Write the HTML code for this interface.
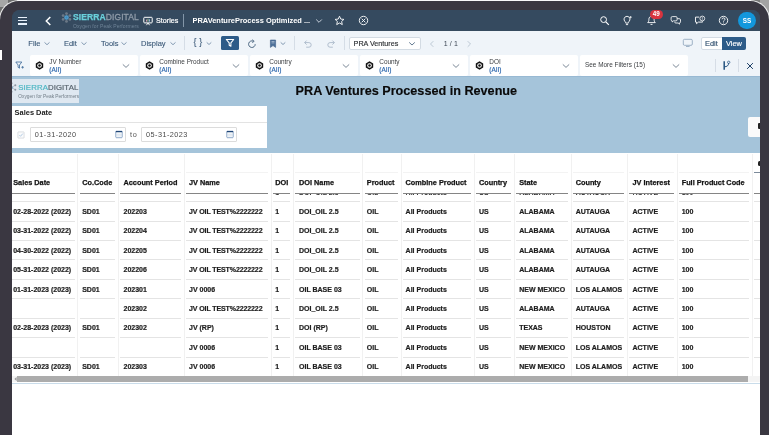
<!DOCTYPE html>
<html>
<head>
<meta charset="utf-8">
<title>PRA Ventures Processed in Revenue</title>
<style>
*{box-sizing:border-box;margin:0;padding:0}
html,body{width:769px;height:435px;overflow:hidden;background:#fff;font-family:"Liberation Sans",sans-serif;}
.abs{position:absolute}
#stage{position:absolute;left:0;top:0;width:769px;height:435px;overflow:hidden;background:#fff}
.cornL{left:0;top:0;width:20px;height:22px;background:#6e6e6e}
.cornL2{left:0;top:0;width:7.5px;height:7px;background:#a6a6a6}
.cornR{left:749px;top:0;width:20px;height:22px;background:#767676}
.cornR2{left:760px;top:0;width:9px;height:22px;background:#a3a3a3}
.toplight{left:17px;top:0;width:734px;height:1px;background:#d6d6da}
#frame{left:0;top:.8px;width:769px;height:470px;background:#3a3741;border-radius:19px;box-shadow:0 0 0 1px rgba(255,255,255,.85)}
.sidebtn{left:0;top:49.7px;width:1.5px;height:10.3px;background:#fff}
#screen{left:12px;top:10px;width:748px;height:460px;background:linear-gradient(#354a5f 0,#354a5f 21px,#fff 21px);border-radius:8px 8px 0 0;overflow:hidden}
#o{left:-12px;top:-10px;width:769px;height:470px;will-change:transform}
#nav{left:0;top:0;width:769px;height:31.3px;background:#354a5f;color:#fff}
#tool{left:0;top:31px;width:769px;height:23px;background:#eff4f9}
#filt{left:0;top:54px;width:769px;height:22px;background:#eff4f9}
#hero{left:0;top:76.3px;width:769px;height:77.2px;background:#a5c4da;border-top:1px solid #98b9d3}
#tbl{left:0;top:153.5px;width:769px;height:300px;background:#fff}
.t{position:absolute;white-space:nowrap;line-height:1}
.tb{color:#3a5877;font-size:7.5px;-webkit-text-stroke:.1px #3a5877}
.fbox{position:absolute;top:55.4px;height:20.9px;width:108px;background:#fff;border-radius:2px}
.f1{font-size:6.4px;color:#3a3d40}
.f2{font-size:6.4px;letter-spacing:.18px;color:#2e68ad;-webkit-text-stroke:.2px #2e68ad}
.c{font-size:7px;font-weight:bold;color:#1e1e1e;-webkit-text-stroke:.2px #1e1e1e}
.h{font-size:7.32px;font-weight:bold;color:#141414;-webkit-text-stroke:.25px #141414}
.vl{position:absolute;width:1px;background:#f1f1f1}
.hl{position:absolute;height:1px;background:#e4e4e4}
.hd{position:absolute;height:1px;background:#858585}
.gh{position:absolute;top:193.5px;height:1.4px;overflow:hidden;white-space:nowrap;font-size:7px;font-weight:bold;color:#333;line-height:1}
.gh span{position:relative;top:-4.1px;display:block}
</style>
</head>
<body>
<div id="stage">
  <div class="abs cornL"></div><div class="abs cornL2"></div>
  <div class="abs cornR"></div><div class="abs cornR2"></div>
  <div class="abs toplight"></div>
  <div class="abs" id="frame"></div>
  <div class="abs sidebtn"></div>
  <div class="abs" id="screen"><div class="abs" id="o">
    <div class="abs" id="nav"></div>
    <div class="abs" id="tool"></div>
    <div class="abs" id="filt"></div>
    <div class="abs" id="hero"></div>
    <div class="abs" id="tbl"></div>
    <div id="navc">

      <!-- hamburger -->
      <div class="abs" style="left:18px;top:16.8px;width:9.4px;height:1.4px;background:#e8f1fb"></div>
      <div class="abs" style="left:18px;top:20.1px;width:9.4px;height:1.4px;background:#e8f1fb"></div>
      <div class="abs" style="left:18px;top:23.4px;width:9.4px;height:1.4px;background:#e8f1fb"></div>
      <!-- back chevron -->
      <svg class="abs" style="left:44px;top:15px" width="9" height="12" viewBox="0 0 9 12"><path d="M6.3 2 L2.3 6 L6.3 10" fill="none" stroke="#fff" stroke-width="1.5"/></svg>
      <!-- logo -->
      <svg class="abs" style="left:61.3px;top:11.5px" width="11" height="11" viewBox="0 0 11 11"><g fill="#6d7a88"><circle cx="5.5" cy="1.6" r="1.35"/><circle cx="8.88" cy="3.55" r="1.35"/><circle cx="8.88" cy="7.45" r="1.35"/><circle cx="5.5" cy="9.4" r="1.35"/><circle cx="2.12" cy="7.45" r="1.35"/><circle cx="2.12" cy="3.55" r="1.35"/></g><path d="M5.5 1.6L5.5 9.4M8.88 3.55L2.12 7.45M8.88 7.45L2.12 3.55" stroke="#66727f" stroke-width=".45"/><circle cx="5.5" cy="5.5" r="2.25" fill="#4e9dcc"/><circle cx="5.5" cy="5.5" r="1" fill="#3f86b8"/></svg>
      <div class="t" id="lg1" style="left:73px;top:12.7px;font-size:8.5px;font-weight:bold;color:#6ad0db;-webkit-text-stroke:.25px #6ad0db;letter-spacing:.1px">SIERRA<span style="color:#8f9ba8;font-weight:normal;-webkit-text-stroke:.3px #8f9ba8">DIGITAL</span></div>
      <div class="t" id="lg2" style="left:73px;top:24px;font-size:5px;color:#6f8497;letter-spacing:.1px">Oxygen for Peak Performers</div>
      <!-- stories -->
      <svg class="abs" style="left:142.8px;top:15.6px" width="10" height="10" viewBox="0 0 10 10"><rect x=".8" y="1.3" width="8.4" height="5.6" rx=".8" fill="none" stroke="#fff" stroke-width="1"/><path d="M3.4 9.2L5 7L6.6 9.2" fill="none" stroke="#fff" stroke-width=".9"/><path d="M3.5 3.6v2" stroke="#e9a3b8" stroke-width=".9"/><path d="M5 2.8v2.8" stroke="#a9d6a0" stroke-width=".9"/><path d="M6.5 3.3v2.3" stroke="#9cc4ee" stroke-width=".9"/></svg>
      <div class="t" id="st" style="left:156.1px;top:17.7px;font-size:7.15px;color:#fff;-webkit-text-stroke:.2px #fff">Stories</div>
      <div class="abs" style="left:183px;top:14px;width:1px;height:13px;background:#8396a8"></div>
      <div class="t" id="ttl" style="left:192.5px;top:17.2px;font-size:7.45px;font-weight:bold;color:#fff">PRAVentureProcess Optimized ...</div>
      <svg class="abs" style="left:314.6px;top:18px" width="8" height="6" viewBox="0 0 8 6"><path d="M1.2 1.5 L4 4.3 L6.8 1.5" fill="none" stroke="#d5dde6" stroke-width=".9"/></svg>
      <svg class="abs" style="left:334.1px;top:15.3px" width="11" height="11" viewBox="0 0 11 11"><path d="M5.5 1.2 L6.8 4.1 L9.9 4.4 L7.6 6.5 L8.3 9.6 L5.5 8 L2.7 9.6 L3.4 6.5 L1.1 4.4 L4.2 4.1 Z" fill="none" stroke="#fff" stroke-width=".9" stroke-linejoin="round"/></svg>
      <svg class="abs" style="left:357.8px;top:15.3px" width="11" height="11" viewBox="0 0 11 11"><circle cx="5.5" cy="5.5" r="4.2" fill="none" stroke="#fff" stroke-width=".9"/><path d="M3.7 3.7L7.3 7.3M7.3 3.7L3.7 7.3" stroke="#fff" stroke-width=".9"/></svg>
      <!-- right icons -->
      <svg class="abs" style="left:599px;top:15px" width="11" height="11" viewBox="0 0 11 11"><circle cx="4.6" cy="4.6" r="2.9" fill="none" stroke="#fff" stroke-width="1"/><path d="M6.8 6.8L9.8 9.8" stroke="#fff" stroke-width="1.2"/></svg>
      <svg class="abs" style="left:622px;top:15px" width="11" height="11" viewBox="0 0 11 11"><path d="M5 1.3a3 3 0 0 1 2 5.2c-.5.5-.7.9-.7 1.6H3.7c0-.7-.2-1.1-.7-1.6a3 3 0 0 1 2-5.2z M3.9 9.6h2.2" fill="none" stroke="#fff" stroke-width=".9"/><path d="M8.6 1v2.4M7.4 2.2h2.4" stroke="#fff" stroke-width=".7"/></svg>
      <svg class="abs" style="left:646px;top:15px" width="11" height="11" viewBox="0 0 11 11"><path d="M5.5 1.4c1.7 0 2.6 1.2 2.6 2.9 0 1.7.4 2.6 1.2 3.3H1.7c.8-.7 1.2-1.6 1.2-3.3 0-1.7.9-2.9 2.6-2.9z M4.5 9.4h2" fill="none" stroke="#fff" stroke-width=".9"/></svg>
      <div class="abs" style="left:649.5px;top:9.9px;width:13.4px;height:9.1px;border-radius:4.5px;background:#d8343f"></div>
      <div class="t" id="bdg" style="left:649.5px;top:11.3px;width:13.4px;text-align:center;font-size:6.3px;color:#fff;font-weight:bold">49</div>
      <svg class="abs" style="left:670px;top:15px" width="12" height="11" viewBox="0 0 12 11"><path d="M2.3 1.6h3.6a1.2 1.2 0 0 1 1.2 1.2v1.9a1.2 1.2 0 0 1-1.2 1.2H3.4L2.2 7V5.9a1.2 1.2 0 0 1-1.1-1.2V2.8a1.2 1.2 0 0 1 1.2-1.2z" fill="none" stroke="#fff" stroke-width=".85"/><path d="M7.2 3.7h2.1a1.2 1.2 0 0 1 1.2 1.2v1.9a1.2 1.2 0 0 1-1.1 1.2V9.2L8.2 8H5.8a1.2 1.2 0 0 1-1.2-1.1" fill="none" stroke="#fff" stroke-width=".85"/></svg>
      <svg class="abs" style="left:693.5px;top:15px" width="12" height="11" viewBox="0 0 12 11"><path d="M5.2 2.1H1.5v5h1v1.6l1.9-1.6h4.2V6.3" fill="none" stroke="#fff" stroke-width=".9" stroke-linejoin="round"/><circle cx="8.3" cy="3.5" r="2.4" fill="none" stroke="#fff" stroke-width=".8"/><path d="M8.3 2.2v1.6M8.3 4.4v.6" stroke="#fff" stroke-width=".7"/></svg>
      <svg class="abs" style="left:717.5px;top:15px" width="11" height="11" viewBox="0 0 11 11"><circle cx="5.5" cy="5.5" r="4.2" fill="none" stroke="#fff" stroke-width=".9"/><path d="M4.1 4.3a1.4 1.4 0 1 1 2.1 1.2c-.5.3-.7.6-.7 1.1M5.5 7.6v.8" fill="none" stroke="#fff" stroke-width=".9"/></svg>
      <div class="abs" style="left:738.2px;top:11.7px;width:17.5px;height:17.5px;border-radius:50%;background:#1297dc"></div>
      <div class="t" id="av" style="left:738.2px;top:17.5px;width:17.5px;text-align:center;font-size:6.3px;color:#fff;font-weight:bold">SS</div>
    
    </div>
    <div id="toolc">
<div class="t tb" style="left:28.3px;top:40.1px">File</div>
<svg class="abs" style="left:43px;top:41px" width="8" height="6" viewBox="0 0 8 6"><path d="M1.5 1.4 L4 3.6999999999999997 L6.5 1.4" fill="none" stroke="#6783a0" stroke-width="0.8"/></svg>
<div class="t tb" style="left:63.9px;top:40.1px">Edit</div>
<svg class="abs" style="left:79.7px;top:41px" width="8" height="6" viewBox="0 0 8 6"><path d="M1.5 1.4 L4 3.6999999999999997 L6.5 1.4" fill="none" stroke="#6783a0" stroke-width="0.8"/></svg>
<div class="t tb" style="left:101px;top:40.1px">Tools</div>
<svg class="abs" style="left:120.4px;top:41px" width="8" height="6" viewBox="0 0 8 6"><path d="M1.5 1.4 L4 3.6999999999999997 L6.5 1.4" fill="none" stroke="#6783a0" stroke-width="0.8"/></svg>
<div class="t tb" style="left:141px;top:40.1px">Display</div>
<svg class="abs" style="left:168.6px;top:41px" width="8" height="6" viewBox="0 0 8 6"><path d="M1.5 1.4 L4 3.6999999999999997 L6.5 1.4" fill="none" stroke="#6783a0" stroke-width="0.8"/></svg>
<div class="abs" style="left:184px;top:36px;width:1px;height:14px;background:#d5dde6"></div>
<div class="t tb" style="left:193.6px;top:38.3px;font-size:8.8px;letter-spacing:2.6px">{}</div>
<svg class="abs" style="left:205.2px;top:40.5px" width="8" height="6" viewBox="0 0 8 6"><path d="M1.7000000000000002 1.4 L4 3.4999999999999996 L6.3 1.4" fill="none" stroke="#6783a0" stroke-width="0.8"/></svg>
<div class="abs" style="left:220.7px;top:36.4px;width:18px;height:13.5px;border-radius:1.5px;background:#2d5b88"></div>
<svg class="abs" style="left:224.6px;top:38.3px" width="10" height="10" viewBox="0 0 10 10"><path d="M1.3 1.5H8.7L5.9 4.9V8.3L4.2 7.2V4.9Z" fill="none" stroke="#fff" stroke-width="1.1" stroke-linejoin="round"/></svg>
<svg class="abs" style="left:246.9px;top:39px" width="10" height="10" viewBox="0 0 10 10"><path d="M8.2 5.2A3.3 3.3 0 1 1 6.3 2.2" fill="none" stroke="#3b5875" stroke-width=".9"/><path d="M5.3 .7L7.2 2.3L5.2 3.6" fill="none" stroke="#3b5875" stroke-width=".8"/></svg>
<svg class="abs" style="left:269.2px;top:39.3px" width="8" height="10" viewBox="0 0 8 10"><path d="M1.4 1h5.2v7.4L4 6.6L1.4 8.4z" fill="#4d7099" stroke="#3f6189" stroke-width=".6"/><path d="M2.5 2.5h3M2.5 3.9h3" stroke="#c9d6e4" stroke-width=".6"/></svg>
<svg class="abs" style="left:278.5px;top:40.5px" width="8" height="6" viewBox="0 0 8 6"><path d="M1.7000000000000002 1.4 L4 3.4999999999999996 L6.3 1.4" fill="none" stroke="#6783a0" stroke-width="0.8"/></svg>
<div class="abs" style="left:294px;top:36px;width:1px;height:14px;background:#d5dde6"></div>
<svg class="abs" style="left:302.7px;top:38.6px" width="10" height="10" viewBox="0 0 10 10"><path d="M1.7 3.6h4.2a2.3 2.3 0 0 1 0 4.6H3.2" fill="none" stroke="#a9b8c8" stroke-width=".9"/><path d="M3.6 1.6L1.6 3.6L3.6 5.6" fill="none" stroke="#a9b8c8" stroke-width=".9"/></svg>
<svg class="abs" style="left:325.7px;top:38.6px" width="10" height="10" viewBox="0 0 10 10"><path d="M8.3 3.6H4.1a2.3 2.3 0 0 0 0 4.6h2.7" fill="none" stroke="#a9b8c8" stroke-width=".9"/><path d="M6.4 1.6L8.4 3.6L6.4 5.6" fill="none" stroke="#a9b8c8" stroke-width=".9"/></svg>
<div class="abs" style="left:344px;top:36px;width:1px;height:14px;background:#d5dde6"></div>
<div class="abs" style="left:348.6px;top:36.7px;width:72.4px;height:13.6px;background:#fff;border:1px solid #d3dbe3;border-radius:2px"></div>
<div class="t" id="sel" style="left:353.6px;top:40px;font-size:7.2px;color:#2c2f33;-webkit-text-stroke:.15px #2c2f33">PRA Ventures</div>
<svg class="abs" style="left:407.9px;top:40.5px" width="8" height="6" viewBox="0 0 8 6"><path d="M1.2000000000000002 1.4 L4 3.999999999999999 L6.8 1.4" fill="none" stroke="#3b5875" stroke-width="0.8"/></svg>
<svg class="abs" style="left:428.2px;top:39.5px" width="8" height="8" viewBox="0 0 8 8"><path d="M5.3 1.2L2.5 4L5.3 6.8" fill="none" stroke="#b7c3cf" stroke-width=".9"/></svg>
<div class="t" id="pg" style="left:443.8px;top:40px;font-size:7px;color:#3a4552;letter-spacing:.1px">1 / 1</div>
<svg class="abs" style="left:465.2px;top:39.5px" width="8" height="8" viewBox="0 0 8 8"><path d="M2.7 1.2L5.5 4L2.7 6.8" fill="none" stroke="#b7c3cf" stroke-width=".9"/></svg>
<svg class="abs" style="left:682px;top:38.1px" width="12" height="10" viewBox="0 0 12 10"><rect x="1.3" y="1.3" width="9" height="6" rx="1.2" fill="none" stroke="#8ea4bc" stroke-width=".85"/><path d="M4 8.5h3.6" stroke="#8ea4bc" stroke-width=".8"/></svg>
<div class="abs" style="left:700.8px;top:36.7px;width:45.2px;height:13.2px;background:#fff;border:1px solid #d3dbe4;border-radius:2px"></div>
<div class="abs" style="left:722px;top:36.7px;width:24px;height:13.2px;background:#2d5b88;border-radius:0 2px 2px 0"></div>
<div class="t" id="ed" style="left:705px;top:39.6px;font-size:7.4px;color:#31506f;-webkit-text-stroke:.15px #31506f">Edit</div>
<div class="t" id="vw" style="left:726px;top:39.6px;font-size:7.4px;color:#fff;-webkit-text-stroke:.15px #fff">View</div>
    </div>
    <div id="filtc">
<svg class="abs" style="left:14.8px;top:60.8px" width="11" height="10" viewBox="0 0 11 10"><path d="M.8 1H6.8L4.5 4V7.2L3.1 6.3V4Z" fill="none" stroke="#3a6797" stroke-width=".8" stroke-linejoin="round"/><path d="M7.6 5v2.6M6.3 6.3h2.6" stroke="#3a6797" stroke-width=".75"/></svg>
<div class="fbox" style="left:29.8px"></div>
<svg class="abs" style="left:34.5px;top:60.8px" width="9" height="9" viewBox="0 0 9 9"><path d="M4.5 .3L8.2 2.4V6.6L4.5 8.7L.8 6.6V2.4Z" fill="#111"/><circle cx="4.5" cy="4.5" r="2.3" fill="#fff"/><circle cx="4.5" cy="4.5" r="1.25" fill="#111"/></svg>
<div class="t f1" style="left:49.3px;top:58.6px">JV Number</div>
<div class="t f2" style="left:49.3px;top:66.9px">(All)</div>
<svg class="abs" style="left:122.3px;top:62.5px" width="8" height="6" viewBox="0 0 8 6"><path d="M0.7999999999999998 1.4 L4 4.3999999999999995 L7.2 1.4" fill="none" stroke="#5b6b7c" stroke-width="0.8"/></svg>
<div class="fbox" style="left:139.8px"></div>
<svg class="abs" style="left:144.5px;top:60.8px" width="9" height="9" viewBox="0 0 9 9"><path d="M4.5 .3L8.2 2.4V6.6L4.5 8.7L.8 6.6V2.4Z" fill="#111"/><circle cx="4.5" cy="4.5" r="2.3" fill="#fff"/><circle cx="4.5" cy="4.5" r="1.25" fill="#111"/></svg>
<div class="t f1" style="left:159.3px;top:58.6px">Combine Product</div>
<div class="t f2" style="left:159.3px;top:66.9px">(All)</div>
<svg class="abs" style="left:232.3px;top:62.5px" width="8" height="6" viewBox="0 0 8 6"><path d="M0.7999999999999998 1.4 L4 4.3999999999999995 L7.2 1.4" fill="none" stroke="#5b6b7c" stroke-width="0.8"/></svg>
<div class="fbox" style="left:249.8px"></div>
<svg class="abs" style="left:254.5px;top:60.8px" width="9" height="9" viewBox="0 0 9 9"><path d="M4.5 .3L8.2 2.4V6.6L4.5 8.7L.8 6.6V2.4Z" fill="#111"/><circle cx="4.5" cy="4.5" r="2.3" fill="#fff"/><circle cx="4.5" cy="4.5" r="1.25" fill="#111"/></svg>
<div class="t f1" style="left:269.3px;top:58.6px">Country</div>
<div class="t f2" style="left:269.3px;top:66.9px">(All)</div>
<svg class="abs" style="left:342.3px;top:62.5px" width="8" height="6" viewBox="0 0 8 6"><path d="M0.7999999999999998 1.4 L4 4.3999999999999995 L7.2 1.4" fill="none" stroke="#5b6b7c" stroke-width="0.8"/></svg>
<div class="fbox" style="left:359.8px"></div>
<svg class="abs" style="left:364.5px;top:60.8px" width="9" height="9" viewBox="0 0 9 9"><path d="M4.5 .3L8.2 2.4V6.6L4.5 8.7L.8 6.6V2.4Z" fill="#111"/><circle cx="4.5" cy="4.5" r="2.3" fill="#fff"/><circle cx="4.5" cy="4.5" r="1.25" fill="#111"/></svg>
<div class="t f1" style="left:379.3px;top:58.6px">County</div>
<div class="t f2" style="left:379.3px;top:66.9px">(All)</div>
<svg class="abs" style="left:452.3px;top:62.5px" width="8" height="6" viewBox="0 0 8 6"><path d="M0.7999999999999998 1.4 L4 4.3999999999999995 L7.2 1.4" fill="none" stroke="#5b6b7c" stroke-width="0.8"/></svg>
<div class="fbox" style="left:469.8px"></div>
<svg class="abs" style="left:474.5px;top:60.8px" width="9" height="9" viewBox="0 0 9 9"><path d="M4.5 .3L8.2 2.4V6.6L4.5 8.7L.8 6.6V2.4Z" fill="#111"/><circle cx="4.5" cy="4.5" r="2.3" fill="#fff"/><circle cx="4.5" cy="4.5" r="1.25" fill="#111"/></svg>
<div class="t f1" style="left:489.3px;top:58.6px">DOI</div>
<div class="t f2" style="left:489.3px;top:66.9px">(All)</div>
<svg class="abs" style="left:562.3px;top:62.5px" width="8" height="6" viewBox="0 0 8 6"><path d="M0.7999999999999998 1.4 L4 4.3999999999999995 L7.2 1.4" fill="none" stroke="#5b6b7c" stroke-width="0.8"/></svg>
<div class="fbox" style="left:579.8px"></div>
<div class="t f1" id="smf" style="left:585px;top:61.5px;font-size:6.4px">See More Filters (15)</div>
<svg class="abs" style="left:672.3px;top:62.5px" width="8" height="6" viewBox="0 0 8 6"><path d="M0.7999999999999998 1.4 L4 4.3999999999999995 L7.2 1.4" fill="none" stroke="#5b6b7c" stroke-width="0.8"/></svg>
<div class="abs" style="left:714.7px;top:59.3px;width:1px;height:12.3px;background:#d6dde6"></div>
<svg class="abs" style="left:722px;top:60px" width="10" height="11" viewBox="0 0 10 11"><path d="M2.2 1.2v8.6" stroke="#23527f" stroke-width="1.5"/><path d="M2.2 6.8C5 6.8 6.6 5.6 6.6 3.2" fill="none" stroke="#23527f" stroke-width="1"/><circle cx="6.7" cy="2.3" r="1.2" fill="none" stroke="#23527f" stroke-width=".7"/></svg>
<div class="abs" style="left:737.7px;top:59.3px;width:1px;height:12.3px;background:#d6dde6"></div>
<svg class="abs" style="left:745.6px;top:61.7px" width="8" height="8" viewBox="0 0 8 8"><path d="M1.1 1.1L6.9 6.9M6.9 1.1L1.1 6.9" stroke="#1c3f66" stroke-width="1"/></svg>
    </div>
    <div id="heroc">
<div class="abs" style="left:12px;top:78.8px;width:67.2px;height:24px;background:#dfe8f1"></div>
<svg class="abs" style="left:5.8px;top:82.3px" width="11" height="11" viewBox="0 0 11 11"><g fill="#8c98a4"><circle cx="5.5" cy="1.3" r="1"/><circle cx="5.5" cy="9.7" r="1"/><circle cx="1.7" cy="3.3" r="1"/><circle cx="9.3" cy="3.3" r="1"/><circle cx="1.7" cy="7.7" r="1"/><circle cx="9.3" cy="7.7" r="1"/></g><g stroke="#8c98a4" stroke-width=".5"><path d="M5.5 1.3V9.7M1.7 3.3L9.3 7.7M9.3 3.3L1.7 7.7"/></g><circle cx="5.5" cy="5.5" r="1.6" fill="#7fa9c4"/></svg>
<div class="t" id="hl1" style="left:18.3px;top:83.7px;font-size:7.8px;letter-spacing:.1px;color:#4fb7c4;-webkit-text-stroke:.2px #4fb7c4">SIERRA<span style="color:#59656f;-webkit-text-stroke:.2px #59656f">DIGITAL</span></div>
<div class="t" id="hl2" style="left:18.3px;top:94.6px;font-size:4.8px;color:#717d87">Oxygen for Peak Performers</div>
<div class="t" id="title" style="left:295.6px;top:84.6px;font-size:12.65px;font-weight:bold;color:#0a0a0a;-webkit-text-stroke:.15px #0a0a0a">PRA Ventures Processed in Revenue</div>
<div class="abs" style="left:12px;top:105.5px;width:255.3px;height:42.6px;background:#fff"></div>
<div class="t" id="sd" style="left:14.6px;top:109.2px;font-size:7.45px;font-weight:bold;color:#1b1b1b">Sales Date</div>
<div class="abs" style="left:12px;top:121.7px;width:255.3px;height:1px;background:#e3e3e3"></div>
<svg class="abs" style="left:16.5px;top:131px" width="8" height="8" viewBox="0 0 8 8"><rect x=".9" y=".9" width="6.2" height="6.2" rx=".5" fill="#fbfbfb" stroke="#cfd3d8" stroke-width=".7"/><path d="M2.3 4.1L3.5 5.3L5.8 2.6" fill="none" stroke="#9fc0e0" stroke-width=".8"/></svg>
<div class="abs" style="left:29.9px;top:126.6px;width:96px;height:15px;background:#fff;border:1px solid #dcdcdc;border-radius:1px"></div>
<div class="t" id="d1" style="left:34.8px;top:130.8px;font-size:7.3px;color:#4a4a4a;letter-spacing:.45px">01-31-2020</div>
<svg class="abs" style="left:114.9px;top:130.3px" width="8" height="9" viewBox="0 0 8 9"><rect x=".8" y="1.3" width="6.4" height="6.4" rx=".7" fill="#fff" stroke="#5d84b2" stroke-width=".7"/><path d="M.8 1.6h6.4" stroke="#1f4677" stroke-width="1.3"/><path d="M3 2.8v4.6M5 2.8v4.6M1 4.9h6" stroke="#c3d2e2" stroke-width=".5"/></svg>
<div class="abs" style="left:141.1px;top:126.6px;width:96px;height:15px;background:#fff;border:1px solid #dcdcdc;border-radius:1px"></div>
<div class="t" id="d2" style="left:146px;top:130.8px;font-size:7.3px;color:#4a4a4a;letter-spacing:.45px">05-31-2023</div>
<svg class="abs" style="left:226.1px;top:130.3px" width="8" height="9" viewBox="0 0 8 9"><rect x=".8" y="1.3" width="6.4" height="6.4" rx=".7" fill="#fff" stroke="#5d84b2" stroke-width=".7"/><path d="M.8 1.6h6.4" stroke="#1f4677" stroke-width="1.3"/><path d="M3 2.8v4.6M5 2.8v4.6M1 4.9h6" stroke="#c3d2e2" stroke-width=".5"/></svg>
<div class="t" id="to" style="left:130.1px;top:130.6px;font-size:7.3px;letter-spacing:.7px;color:#555">to</div>
<div class="abs" style="left:748.4px;top:116.5px;width:14px;height:20.3px;background:#fafafa;border-radius:2px 0 0 2px"></div>
<div class="abs" style="left:757.6px;top:123px;width:3px;height:6px;background:#222;border-radius:1px 0 0 1px"></div>
    </div>
    <div id="tblc">
<div class="vl" style="left:77.1px;top:153.5px;height:222.5px"></div>
<div class="vl" style="left:117.6px;top:153.5px;height:222.5px"></div>
<div class="vl" style="left:183.7px;top:153.5px;height:222.5px"></div>
<div class="vl" style="left:270.5px;top:153.5px;height:222.5px"></div>
<div class="vl" style="left:292.5px;top:153.5px;height:222.5px"></div>
<div class="vl" style="left:362.1px;top:153.5px;height:222.5px"></div>
<div class="vl" style="left:400.5px;top:153.5px;height:222.5px"></div>
<div class="vl" style="left:473.5px;top:153.5px;height:222.5px"></div>
<div class="vl" style="left:513.5px;top:153.5px;height:222.5px"></div>
<div class="vl" style="left:570.5px;top:153.5px;height:222.5px"></div>
<div class="vl" style="left:626.5px;top:153.5px;height:222.5px"></div>
<div class="vl" style="left:676.5px;top:153.5px;height:222.5px"></div>
<div class="vl" style="left:751.5px;top:153.5px;height:222.5px"></div>
<div class="hl" style="left:12px;top:172.2px;width:62.8px;background:#f3f3f3"></div>
<div class="hd" style="left:12px;top:192.6px;width:62.8px"></div>
<div class="hl" style="left:79.8px;top:172.2px;width:35.5px;background:#f3f3f3"></div>
<div class="hd" style="left:79.8px;top:192.6px;width:35.5px"></div>
<div class="hl" style="left:120.3px;top:172.2px;width:61.09999999999998px;background:#f3f3f3"></div>
<div class="hd" style="left:120.3px;top:192.6px;width:61.09999999999998px"></div>
<div class="hl" style="left:186.39999999999998px;top:172.2px;width:81.80000000000001px;background:#f3f3f3"></div>
<div class="hd" style="left:186.39999999999998px;top:192.6px;width:81.80000000000001px"></div>
<div class="hl" style="left:273.2px;top:172.2px;width:17px;background:#f3f3f3"></div>
<div class="hd" style="left:273.2px;top:192.6px;width:17px"></div>
<div class="hl" style="left:295.2px;top:172.2px;width:64.60000000000002px;background:#f3f3f3"></div>
<div class="hd" style="left:295.2px;top:192.6px;width:64.60000000000002px"></div>
<div class="hl" style="left:364.8px;top:172.2px;width:33.39999999999998px;background:#f3f3f3"></div>
<div class="hd" style="left:364.8px;top:192.6px;width:33.39999999999998px"></div>
<div class="hl" style="left:403.2px;top:172.2px;width:68px;background:#f3f3f3"></div>
<div class="hd" style="left:403.2px;top:192.6px;width:68px"></div>
<div class="hl" style="left:476.2px;top:172.2px;width:35px;background:#f3f3f3"></div>
<div class="hd" style="left:476.2px;top:192.6px;width:35px"></div>
<div class="hl" style="left:516.2px;top:172.2px;width:52px;background:#f3f3f3"></div>
<div class="hd" style="left:516.2px;top:192.6px;width:52px"></div>
<div class="hl" style="left:573.2px;top:172.2px;width:51px;background:#f3f3f3"></div>
<div class="hd" style="left:573.2px;top:192.6px;width:51px"></div>
<div class="hl" style="left:629.2px;top:172.2px;width:45px;background:#f3f3f3"></div>
<div class="hd" style="left:629.2px;top:192.6px;width:45px"></div>
<div class="hl" style="left:679.2px;top:172.2px;width:70px;background:#f3f3f3"></div>
<div class="hd" style="left:679.2px;top:192.6px;width:70px"></div>
<div class="hl" style="left:754.2px;top:172.2px;width:18px;background:#f3f3f3"></div>
<div class="hd" style="left:754.2px;top:192.6px;width:18px"></div>
<div class="hl" style="left:12px;top:201.2px;width:62.8px"></div>
<div class="hl" style="left:79.8px;top:201.2px;width:35.5px"></div>
<div class="hl" style="left:120.3px;top:201.2px;width:61.09999999999998px"></div>
<div class="hl" style="left:186.39999999999998px;top:201.2px;width:81.80000000000001px"></div>
<div class="hl" style="left:273.2px;top:201.2px;width:17px"></div>
<div class="hl" style="left:295.2px;top:201.2px;width:64.60000000000002px"></div>
<div class="hl" style="left:364.8px;top:201.2px;width:33.39999999999998px"></div>
<div class="hl" style="left:403.2px;top:201.2px;width:68px"></div>
<div class="hl" style="left:476.2px;top:201.2px;width:35px"></div>
<div class="hl" style="left:516.2px;top:201.2px;width:52px"></div>
<div class="hl" style="left:573.2px;top:201.2px;width:51px"></div>
<div class="hl" style="left:629.2px;top:201.2px;width:45px"></div>
<div class="hl" style="left:679.2px;top:201.2px;width:70px"></div>
<div class="hl" style="left:754.2px;top:201.2px;width:18px"></div>
<div class="hl" style="left:12px;top:220.62px;width:62.8px"></div>
<div class="hl" style="left:79.8px;top:220.62px;width:35.5px"></div>
<div class="hl" style="left:120.3px;top:220.62px;width:61.09999999999998px"></div>
<div class="hl" style="left:186.39999999999998px;top:220.62px;width:81.80000000000001px"></div>
<div class="hl" style="left:273.2px;top:220.62px;width:17px"></div>
<div class="hl" style="left:295.2px;top:220.62px;width:64.60000000000002px"></div>
<div class="hl" style="left:364.8px;top:220.62px;width:33.39999999999998px"></div>
<div class="hl" style="left:403.2px;top:220.62px;width:68px"></div>
<div class="hl" style="left:476.2px;top:220.62px;width:35px"></div>
<div class="hl" style="left:516.2px;top:220.62px;width:52px"></div>
<div class="hl" style="left:573.2px;top:220.62px;width:51px"></div>
<div class="hl" style="left:629.2px;top:220.62px;width:45px"></div>
<div class="hl" style="left:679.2px;top:220.62px;width:70px"></div>
<div class="hl" style="left:754.2px;top:220.62px;width:18px"></div>
<div class="hl" style="left:12px;top:240.04px;width:62.8px"></div>
<div class="hl" style="left:79.8px;top:240.04px;width:35.5px"></div>
<div class="hl" style="left:120.3px;top:240.04px;width:61.09999999999998px"></div>
<div class="hl" style="left:186.39999999999998px;top:240.04px;width:81.80000000000001px"></div>
<div class="hl" style="left:273.2px;top:240.04px;width:17px"></div>
<div class="hl" style="left:295.2px;top:240.04px;width:64.60000000000002px"></div>
<div class="hl" style="left:364.8px;top:240.04px;width:33.39999999999998px"></div>
<div class="hl" style="left:403.2px;top:240.04px;width:68px"></div>
<div class="hl" style="left:476.2px;top:240.04px;width:35px"></div>
<div class="hl" style="left:516.2px;top:240.04px;width:52px"></div>
<div class="hl" style="left:573.2px;top:240.04px;width:51px"></div>
<div class="hl" style="left:629.2px;top:240.04px;width:45px"></div>
<div class="hl" style="left:679.2px;top:240.04px;width:70px"></div>
<div class="hl" style="left:754.2px;top:240.04px;width:18px"></div>
<div class="hl" style="left:12px;top:259.46px;width:62.8px"></div>
<div class="hl" style="left:79.8px;top:259.46px;width:35.5px"></div>
<div class="hl" style="left:120.3px;top:259.46px;width:61.09999999999998px"></div>
<div class="hl" style="left:186.39999999999998px;top:259.46px;width:81.80000000000001px"></div>
<div class="hl" style="left:273.2px;top:259.46px;width:17px"></div>
<div class="hl" style="left:295.2px;top:259.46px;width:64.60000000000002px"></div>
<div class="hl" style="left:364.8px;top:259.46px;width:33.39999999999998px"></div>
<div class="hl" style="left:403.2px;top:259.46px;width:68px"></div>
<div class="hl" style="left:476.2px;top:259.46px;width:35px"></div>
<div class="hl" style="left:516.2px;top:259.46px;width:52px"></div>
<div class="hl" style="left:573.2px;top:259.46px;width:51px"></div>
<div class="hl" style="left:629.2px;top:259.46px;width:45px"></div>
<div class="hl" style="left:679.2px;top:259.46px;width:70px"></div>
<div class="hl" style="left:754.2px;top:259.46px;width:18px"></div>
<div class="hl" style="left:12px;top:278.88px;width:62.8px"></div>
<div class="hl" style="left:79.8px;top:278.88px;width:35.5px"></div>
<div class="hl" style="left:120.3px;top:278.88px;width:61.09999999999998px"></div>
<div class="hl" style="left:186.39999999999998px;top:278.88px;width:81.80000000000001px"></div>
<div class="hl" style="left:273.2px;top:278.88px;width:17px"></div>
<div class="hl" style="left:295.2px;top:278.88px;width:64.60000000000002px"></div>
<div class="hl" style="left:364.8px;top:278.88px;width:33.39999999999998px"></div>
<div class="hl" style="left:403.2px;top:278.88px;width:68px"></div>
<div class="hl" style="left:476.2px;top:278.88px;width:35px"></div>
<div class="hl" style="left:516.2px;top:278.88px;width:52px"></div>
<div class="hl" style="left:573.2px;top:278.88px;width:51px"></div>
<div class="hl" style="left:629.2px;top:278.88px;width:45px"></div>
<div class="hl" style="left:679.2px;top:278.88px;width:70px"></div>
<div class="hl" style="left:754.2px;top:278.88px;width:18px"></div>
<div class="hl" style="left:12px;top:298.3px;width:62.8px"></div>
<div class="hl" style="left:79.8px;top:298.3px;width:35.5px"></div>
<div class="hl" style="left:120.3px;top:298.3px;width:61.09999999999998px"></div>
<div class="hl" style="left:186.39999999999998px;top:298.3px;width:81.80000000000001px"></div>
<div class="hl" style="left:273.2px;top:298.3px;width:17px"></div>
<div class="hl" style="left:295.2px;top:298.3px;width:64.60000000000002px"></div>
<div class="hl" style="left:364.8px;top:298.3px;width:33.39999999999998px"></div>
<div class="hl" style="left:403.2px;top:298.3px;width:68px"></div>
<div class="hl" style="left:476.2px;top:298.3px;width:35px"></div>
<div class="hl" style="left:516.2px;top:298.3px;width:52px"></div>
<div class="hl" style="left:573.2px;top:298.3px;width:51px"></div>
<div class="hl" style="left:629.2px;top:298.3px;width:45px"></div>
<div class="hl" style="left:679.2px;top:298.3px;width:70px"></div>
<div class="hl" style="left:754.2px;top:298.3px;width:18px"></div>
<div class="hl" style="left:12px;top:317.72px;width:62.8px"></div>
<div class="hl" style="left:79.8px;top:317.72px;width:35.5px"></div>
<div class="hl" style="left:120.3px;top:317.72px;width:61.09999999999998px"></div>
<div class="hl" style="left:186.39999999999998px;top:317.72px;width:81.80000000000001px"></div>
<div class="hl" style="left:273.2px;top:317.72px;width:17px"></div>
<div class="hl" style="left:295.2px;top:317.72px;width:64.60000000000002px"></div>
<div class="hl" style="left:364.8px;top:317.72px;width:33.39999999999998px"></div>
<div class="hl" style="left:403.2px;top:317.72px;width:68px"></div>
<div class="hl" style="left:476.2px;top:317.72px;width:35px"></div>
<div class="hl" style="left:516.2px;top:317.72px;width:52px"></div>
<div class="hl" style="left:573.2px;top:317.72px;width:51px"></div>
<div class="hl" style="left:629.2px;top:317.72px;width:45px"></div>
<div class="hl" style="left:679.2px;top:317.72px;width:70px"></div>
<div class="hl" style="left:754.2px;top:317.72px;width:18px"></div>
<div class="hl" style="left:12px;top:337.14px;width:62.8px"></div>
<div class="hl" style="left:79.8px;top:337.14px;width:35.5px"></div>
<div class="hl" style="left:120.3px;top:337.14px;width:61.09999999999998px"></div>
<div class="hl" style="left:186.39999999999998px;top:337.14px;width:81.80000000000001px"></div>
<div class="hl" style="left:273.2px;top:337.14px;width:17px"></div>
<div class="hl" style="left:295.2px;top:337.14px;width:64.60000000000002px"></div>
<div class="hl" style="left:364.8px;top:337.14px;width:33.39999999999998px"></div>
<div class="hl" style="left:403.2px;top:337.14px;width:68px"></div>
<div class="hl" style="left:476.2px;top:337.14px;width:35px"></div>
<div class="hl" style="left:516.2px;top:337.14px;width:52px"></div>
<div class="hl" style="left:573.2px;top:337.14px;width:51px"></div>
<div class="hl" style="left:629.2px;top:337.14px;width:45px"></div>
<div class="hl" style="left:679.2px;top:337.14px;width:70px"></div>
<div class="hl" style="left:754.2px;top:337.14px;width:18px"></div>
<div class="hl" style="left:12px;top:356.56px;width:62.8px"></div>
<div class="hl" style="left:79.8px;top:356.56px;width:35.5px"></div>
<div class="hl" style="left:120.3px;top:356.56px;width:61.09999999999998px"></div>
<div class="hl" style="left:186.39999999999998px;top:356.56px;width:81.80000000000001px"></div>
<div class="hl" style="left:273.2px;top:356.56px;width:17px"></div>
<div class="hl" style="left:295.2px;top:356.56px;width:64.60000000000002px"></div>
<div class="hl" style="left:364.8px;top:356.56px;width:33.39999999999998px"></div>
<div class="hl" style="left:403.2px;top:356.56px;width:68px"></div>
<div class="hl" style="left:476.2px;top:356.56px;width:35px"></div>
<div class="hl" style="left:516.2px;top:356.56px;width:52px"></div>
<div class="hl" style="left:573.2px;top:356.56px;width:51px"></div>
<div class="hl" style="left:629.2px;top:356.56px;width:45px"></div>
<div class="hl" style="left:679.2px;top:356.56px;width:70px"></div>
<div class="hl" style="left:754.2px;top:356.56px;width:18px"></div>
<div class="t h" style="left:13.2px;top:179.2px">Sales Date</div>
<div class="t h" style="left:82.2px;top:179.2px">Co.Code</div>
<div class="t h" style="left:123.5px;top:179.2px">Account Period</div>
<div class="t h" style="left:189px;top:179.2px">JV Name</div>
<div class="t h" style="left:275.2px;top:179.2px">DOI</div>
<div class="t h" style="left:299px;top:179.2px">DOI Name</div>
<div class="t h" style="left:366.8px;top:179.2px">Product</div>
<div class="t h" style="left:405.6px;top:179.2px">Combine Product</div>
<div class="t h" style="left:479px;top:179.2px">Country</div>
<div class="t h" style="left:519.2px;top:179.2px">State</div>
<div class="t h" style="left:575.7px;top:179.2px">County</div>
<div class="t h" style="left:632.5px;top:179.2px">JV Interest</div>
<div class="t h" style="left:681.7px;top:179.2px">Full Product Code</div>
<div class="t c" style="left:13.2px;top:207.9px">02-28-2022 (2022)</div>
<div class="t c" style="left:82.2px;top:207.9px">SD01</div>
<div class="t c" style="left:123.5px;top:207.9px">202203</div>
<div class="t c" style="left:189px;top:207.9px;letter-spacing:-.1px">JV OIL TEST%2222222</div>
<div class="t c" style="left:275.2px;top:207.9px">1</div>
<div class="t c" style="left:299px;top:207.9px">DOI_OIL 2.5</div>
<div class="t c" style="left:366.8px;top:207.9px">OIL</div>
<div class="t c" style="left:405.6px;top:207.9px">All Products</div>
<div class="t c" style="left:479px;top:207.9px">US</div>
<div class="t c" style="left:519.2px;top:207.9px">ALABAMA</div>
<div class="t c" style="left:575.7px;top:207.9px">AUTAUGA</div>
<div class="t c" style="left:632.5px;top:207.9px">ACTIVE</div>
<div class="t c" style="left:681.7px;top:207.9px">100</div>
<div class="t c" style="left:13.2px;top:227.32px">03-31-2022 (2022)</div>
<div class="t c" style="left:82.2px;top:227.32px">SD01</div>
<div class="t c" style="left:123.5px;top:227.32px">202204</div>
<div class="t c" style="left:189px;top:227.32px;letter-spacing:-.1px">JV OIL TEST%2222222</div>
<div class="t c" style="left:275.2px;top:227.32px">1</div>
<div class="t c" style="left:299px;top:227.32px">DOI_OIL 2.5</div>
<div class="t c" style="left:366.8px;top:227.32px">OIL</div>
<div class="t c" style="left:405.6px;top:227.32px">All Products</div>
<div class="t c" style="left:479px;top:227.32px">US</div>
<div class="t c" style="left:519.2px;top:227.32px">ALABAMA</div>
<div class="t c" style="left:575.7px;top:227.32px">AUTAUGA</div>
<div class="t c" style="left:632.5px;top:227.32px">ACTIVE</div>
<div class="t c" style="left:681.7px;top:227.32px">100</div>
<div class="t c" style="left:13.2px;top:246.74px">04-30-2022 (2022)</div>
<div class="t c" style="left:82.2px;top:246.74px">SD01</div>
<div class="t c" style="left:123.5px;top:246.74px">202205</div>
<div class="t c" style="left:189px;top:246.74px;letter-spacing:-.1px">JV OIL TEST%2222222</div>
<div class="t c" style="left:275.2px;top:246.74px">1</div>
<div class="t c" style="left:299px;top:246.74px">DOI_OIL 2.5</div>
<div class="t c" style="left:366.8px;top:246.74px">OIL</div>
<div class="t c" style="left:405.6px;top:246.74px">All Products</div>
<div class="t c" style="left:479px;top:246.74px">US</div>
<div class="t c" style="left:519.2px;top:246.74px">ALABAMA</div>
<div class="t c" style="left:575.7px;top:246.74px">AUTAUGA</div>
<div class="t c" style="left:632.5px;top:246.74px">ACTIVE</div>
<div class="t c" style="left:681.7px;top:246.74px">100</div>
<div class="t c" style="left:13.2px;top:266.16px">05-31-2022 (2022)</div>
<div class="t c" style="left:82.2px;top:266.16px">SD01</div>
<div class="t c" style="left:123.5px;top:266.16px">202206</div>
<div class="t c" style="left:189px;top:266.16px;letter-spacing:-.1px">JV OIL TEST%2222222</div>
<div class="t c" style="left:275.2px;top:266.16px">1</div>
<div class="t c" style="left:299px;top:266.16px">DOI_OIL 2.5</div>
<div class="t c" style="left:366.8px;top:266.16px">OIL</div>
<div class="t c" style="left:405.6px;top:266.16px">All Products</div>
<div class="t c" style="left:479px;top:266.16px">US</div>
<div class="t c" style="left:519.2px;top:266.16px">ALABAMA</div>
<div class="t c" style="left:575.7px;top:266.16px">AUTAUGA</div>
<div class="t c" style="left:632.5px;top:266.16px">ACTIVE</div>
<div class="t c" style="left:681.7px;top:266.16px">100</div>
<div class="t c" style="left:13.2px;top:285.58px">01-31-2023 (2023)</div>
<div class="t c" style="left:82.2px;top:285.58px">SD01</div>
<div class="t c" style="left:123.5px;top:285.58px">202301</div>
<div class="t c" style="left:189px;top:285.58px">JV 0006</div>
<div class="t c" style="left:275.2px;top:285.58px">1</div>
<div class="t c" style="left:299px;top:285.58px">OIL BASE 03</div>
<div class="t c" style="left:366.8px;top:285.58px">OIL</div>
<div class="t c" style="left:405.6px;top:285.58px">All Products</div>
<div class="t c" style="left:479px;top:285.58px">US</div>
<div class="t c" style="left:519.2px;top:285.58px">NEW MEXICO</div>
<div class="t c" style="left:575.7px;top:285.58px">LOS ALAMOS</div>
<div class="t c" style="left:632.5px;top:285.58px">ACTIVE</div>
<div class="t c" style="left:681.7px;top:285.58px">100</div>
<div class="t c" style="left:123.5px;top:305px">202302</div>
<div class="t c" style="left:189px;top:305px;letter-spacing:-.1px">JV OIL TEST%2222222</div>
<div class="t c" style="left:275.2px;top:305px">1</div>
<div class="t c" style="left:299px;top:305px">DOI_OIL 2.5</div>
<div class="t c" style="left:366.8px;top:305px">OIL</div>
<div class="t c" style="left:405.6px;top:305px">All Products</div>
<div class="t c" style="left:479px;top:305px">US</div>
<div class="t c" style="left:519.2px;top:305px">ALABAMA</div>
<div class="t c" style="left:575.7px;top:305px">AUTAUGA</div>
<div class="t c" style="left:632.5px;top:305px">ACTIVE</div>
<div class="t c" style="left:681.7px;top:305px">100</div>
<div class="t c" style="left:13.2px;top:324.42px">02-28-2023 (2023)</div>
<div class="t c" style="left:82.2px;top:324.42px">SD01</div>
<div class="t c" style="left:123.5px;top:324.42px">202302</div>
<div class="t c" style="left:189px;top:324.42px">JV (RP)</div>
<div class="t c" style="left:275.2px;top:324.42px">1</div>
<div class="t c" style="left:299px;top:324.42px">DOI (RP)</div>
<div class="t c" style="left:366.8px;top:324.42px">OIL</div>
<div class="t c" style="left:405.6px;top:324.42px">All Products</div>
<div class="t c" style="left:479px;top:324.42px">US</div>
<div class="t c" style="left:519.2px;top:324.42px">TEXAS</div>
<div class="t c" style="left:575.7px;top:324.42px">HOUSTON</div>
<div class="t c" style="left:632.5px;top:324.42px">ACTIVE</div>
<div class="t c" style="left:681.7px;top:324.42px">100</div>
<div class="t c" style="left:189px;top:343.84px">JV 0006</div>
<div class="t c" style="left:275.2px;top:343.84px">1</div>
<div class="t c" style="left:299px;top:343.84px">OIL BASE 03</div>
<div class="t c" style="left:366.8px;top:343.84px">OIL</div>
<div class="t c" style="left:405.6px;top:343.84px">All Products</div>
<div class="t c" style="left:479px;top:343.84px">US</div>
<div class="t c" style="left:519.2px;top:343.84px">NEW MEXICO</div>
<div class="t c" style="left:575.7px;top:343.84px">LOS ALAMOS</div>
<div class="t c" style="left:632.5px;top:343.84px">ACTIVE</div>
<div class="t c" style="left:681.7px;top:343.84px">100</div>
<div class="t c" style="left:13.2px;top:363.26px">03-31-2023 (2023)</div>
<div class="t c" style="left:82.2px;top:363.26px">SD01</div>
<div class="t c" style="left:123.5px;top:363.26px">202303</div>
<div class="t c" style="left:189px;top:363.26px">JV 0006</div>
<div class="t c" style="left:275.2px;top:363.26px">1</div>
<div class="t c" style="left:299px;top:363.26px">OIL BASE 03</div>
<div class="t c" style="left:366.8px;top:363.26px">OIL</div>
<div class="t c" style="left:405.6px;top:363.26px">All Products</div>
<div class="t c" style="left:479px;top:363.26px">US</div>
<div class="t c" style="left:519.2px;top:363.26px">NEW MEXICO</div>
<div class="t c" style="left:575.7px;top:363.26px">LOS ALAMOS</div>
<div class="t c" style="left:632.5px;top:363.26px">ACTIVE</div>
<div class="t c" style="left:681.7px;top:363.26px">100</div>
<div class="gh" style="left:275.2px"><span>1</span></div>
<div class="gh" style="left:299px"><span>DOI_OIL 2.5</span></div>
<div class="gh" style="left:366.8px"><span>OIL</span></div>
<div class="gh" style="left:405.6px"><span>All Products</span></div>
<div class="gh" style="left:479px"><span>US</span></div>
<div class="gh" style="left:519.2px"><span>ALABAMA</span></div>
<div class="gh" style="left:575.7px"><span>AUTAUGA</span></div>
<div class="gh" style="left:632.5px"><span>ACTIVE</span></div>
<div class="gh" style="left:681.7px"><span>100</span></div>
<div class="abs" style="left:754.2px;top:172.2px;width:6px;height:1px;background:#7d8b9b"></div>
<div class="abs" style="left:12px;top:375.6px;width:748px;height:6.4px;background:#f4f4f4"></div>
<div class="abs" style="left:16.8px;top:375.6px;width:731.5px;height:6.2px;background:#acacac"></div>
<div class="abs" style="left:12px;top:383px;width:748px;height:1px;background:#c9dcea"></div>
<svg class="abs" style="left:12.5px;top:376px" width="5" height="6" viewBox="0 0 5 6"><path d="M3.6 1L1.4 3L3.6 5Z" fill="#9a9a9a"/></svg>
<div class="abs" style="left:757.6px;top:160.5px;width:3px;height:5px;background:#222;border-radius:1.5px 0 0 1.5px"></div>
    </div>
  </div></div>
</div>
</body>
</html>
